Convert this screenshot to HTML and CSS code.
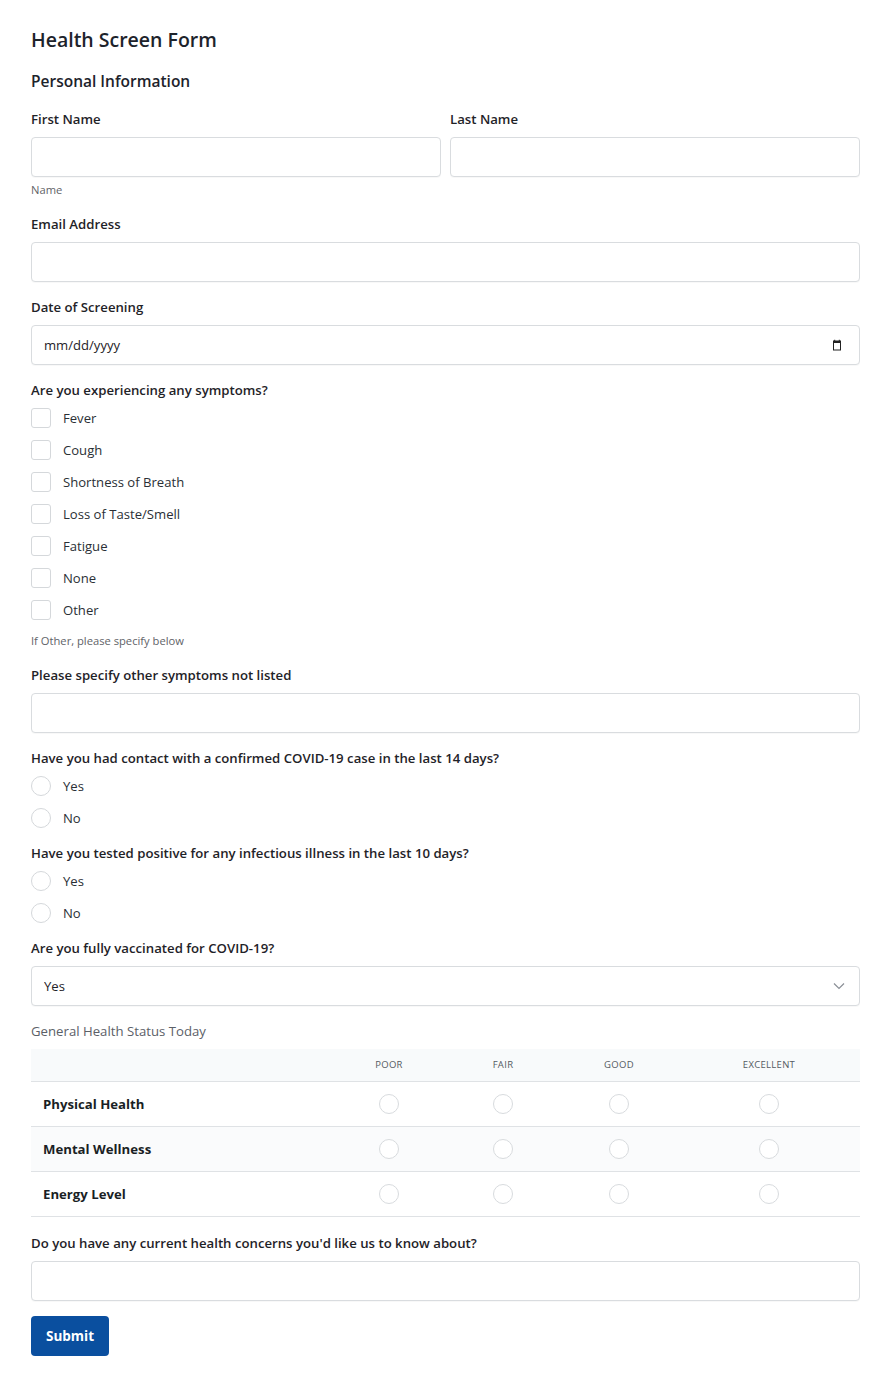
FILE: index.html
```html
<!DOCTYPE html>
<html lang="en">
<head>
<meta charset="utf-8">
<title>Health Screen Form</title>
<link rel="stylesheet" href="styles.css">
</head>
<body>
<form class="form">
  <h1 class="title">Health Screen Form</h1>
  <h2 class="section">Personal Information</h2>

  <div class="group">
    <div class="row2">
      <div class="col">
        <label class="label" for="fn">First Name</label>
        <input class="input" id="fn" type="text">
      </div>
      <div class="col">
        <label class="label" for="ln">Last Name</label>
        <input class="input" id="ln" type="text">
      </div>
    </div>
    <div class="help help-name">Name</div>
  </div>

  <div class="group">
    <label class="label" for="em">Email Address</label>
    <input class="input" id="em" type="email">
  </div>

  <div class="group">
    <label class="label" for="dt">Date of Screening</label>
    <div class="input date">
      <span>mm/dd/yyyy</span>
      <svg class="cal" width="12" height="12" viewBox="0 0 12 12"><path d="M2 1.5h1.2V0.8h1v0.7h3.6V0.8h1v0.7H10v10H2z" fill="#222"/><rect x="3" y="4" width="6" height="6.5" fill="#fff"/></svg>
    </div>
  </div>

  <div class="group">
    <div class="label">Are you experiencing any symptoms?</div>
    <div class="options">
      <label class="opt"><input type="checkbox" class="box"><span>Fever</span></label>
      <label class="opt"><input type="checkbox" class="box"><span>Cough</span></label>
      <label class="opt"><input type="checkbox" class="box"><span>Shortness of Breath</span></label>
      <label class="opt"><input type="checkbox" class="box"><span>Loss of Taste/Smell</span></label>
      <label class="opt"><input type="checkbox" class="box"><span>Fatigue</span></label>
      <label class="opt"><input type="checkbox" class="box"><span>None</span></label>
      <label class="opt"><input type="checkbox" class="box"><span>Other</span></label>
    </div>
    <div class="help help-other">If Other, please specify below</div>
  </div>

  <div class="group">
    <label class="label" for="os">Please specify other symptoms not listed</label>
    <input class="input" id="os" type="text">
  </div>

  <div class="group">
    <div class="label">Have you had contact with a confirmed COVID-19 case in the last 14 days?</div>
    <div class="options">
      <label class="opt"><input type="radio" name="c" class="rad"><span>Yes</span></label>
      <label class="opt"><input type="radio" name="c" class="rad"><span>No</span></label>
    </div>
  </div>

  <div class="group">
    <div class="label">Have you tested positive for any infectious illness in the last 10 days?</div>
    <div class="options">
      <label class="opt"><input type="radio" name="t" class="rad"><span>Yes</span></label>
      <label class="opt"><input type="radio" name="t" class="rad"><span>No</span></label>
    </div>
  </div>

  <div class="group">
    <label class="label" for="vac">Are you fully vaccinated for COVID-19?</label>
    <div class="select-wrap">
      <select class="input select" id="vac"><option>Yes</option><option>No</option></select>
      <svg class="chev" width="12" height="8" viewBox="0 0 12 8"><path d="M1 1.5l5 5 5-5" fill="none" stroke="#8a8f96" stroke-width="1.2"/></svg>
    </div>
  </div>

  <div class="group">
    <div class="legend">General Health Status Today</div>
    <table class="matrix">
      <colgroup><col class="c-label"><col class="c-poor"><col class="c-fair"><col class="c-good"><col class="c-exc"></colgroup>
      <thead>
        <tr><th></th><th>Poor</th><th>Fair</th><th>Good</th><th>Excellent</th></tr>
      </thead>
      <tbody>
        <tr><td class="rl">Physical Health</td><td><input type="radio" name="p" class="rad"></td><td><input type="radio" name="p" class="rad"></td><td><input type="radio" name="p" class="rad"></td><td><input type="radio" name="p" class="rad"></td></tr>
        <tr class="alt"><td class="rl">Mental Wellness</td><td><input type="radio" name="m" class="rad"></td><td><input type="radio" name="m" class="rad"></td><td><input type="radio" name="m" class="rad"></td><td><input type="radio" name="m" class="rad"></td></tr>
        <tr><td class="rl">Energy Level</td><td><input type="radio" name="e" class="rad"></td><td><input type="radio" name="e" class="rad"></td><td><input type="radio" name="e" class="rad"></td><td><input type="radio" name="e" class="rad"></td></tr>
      </tbody>
    </table>
  </div>

  <div class="group group-concerns">
    <label class="label" for="hc">Do you have any current health concerns you'd like us to know about?</label>
    <input class="input" id="hc" type="text">
  </div>

  <div class="actions">
    <button type="button" class="submit">Submit</button>
  </div>
</form>
</body>
</html>
```

FILE: styles.css
```css
* { box-sizing: border-box; }

html, body {
  margin: 0;
  background: #ffffff;
}

body {
  font-family: "Open Sans", "Noto Sans", Arial, sans-serif;
  color: #1f2328;
  font-size: 13.2px;
}

.form {
  padding: 26px 20px 24px 31px;
  display: flex;
  flex-direction: column;
}

.title {
  margin: 0;
  font-size: 19.5px;
  line-height: 28px;
  font-weight: 600;
  color: #1d232b;
}

.section {
  margin: 15px 0 16px;
  font-size: 15.5px;
  line-height: 24px;
  font-weight: 600;
  color: #1d232b;
}

.group {
  display: flex;
  flex-direction: column;
  margin-bottom: 15px;
}

.row2 {
  display: flex;
  gap: 9px;
}

.col {
  flex: 1;
  display: flex;
  flex-direction: column;
}

.label {
  display: block;
  font-size: 13.2px;
  line-height: 20px;
  font-weight: 600;
  color: #1f2328;
  margin-bottom: 8px;
}

.input {
  display: block;
  width: 100%;
  height: 40px;
  border: 1px solid #d9dcdf;
  border-radius: 4px;
  background: #fff;
  font: inherit;
  font-size: 13.1px;
  color: #1f2328;
  padding: 0 12px;
  margin: 0;
  box-shadow: 0 1px 1px rgba(0,0,0,0.03);
}

.date {
  display: flex;
  align-items: center;
  justify-content: space-between;
  padding: 0 16px 0 12px;
}

.help {
  font-size: 11.2px;
  line-height: 16px;
  color: #5f6368;
  margin-top: 6px;
}

.help-name {
  margin-top: 5px;
  margin-bottom: 1px;
}

.help-other {
  margin-top: 13px;
  margin-bottom: 1px;
}

.options {
  display: flex;
  flex-direction: column;
  gap: 12px;
}

.opt {
  display: flex;
  align-items: center;
  gap: 12px;
  height: 20px;
  font-size: 13.1px;
  color: #2a2f35;
}

.box, .rad {
  appearance: none;
  -webkit-appearance: none;
  width: 20px;
  height: 20px;
  margin: 0;
  border: 1px solid #d5d8db;
  background: #fff;
  flex: none;
}

.box { border-radius: 3px; }
.rad { border-radius: 50%; }

.select-wrap {
  position: relative;
}

.select {
  appearance: none;
  -webkit-appearance: none;
}

.chev {
  position: absolute;
  right: 15px;
  top: 16px;
  pointer-events: none;
}

.legend {
  font-size: 13.2px;
  line-height: 20px;
  color: #5b6067;
  margin-bottom: 8px;
}

.matrix {
  width: 100%;
  border-collapse: collapse;
  table-layout: fixed;
}

.c-label { width: 301px; }
.c-poor { width: 114px; }
.c-fair { width: 114px; }
.c-good { width: 118px; }

.matrix thead tr {
  background: #f8fafb;
  border-bottom: 1px solid #dfe2e5;
}

.matrix th {
  height: 32px;
  padding: 0;
  font-size: 9.5px;
  font-weight: 400;
  text-transform: uppercase;
  letter-spacing: 0.3px;
  color: #555b62;
  text-align: center;
}

.matrix tbody tr {
  border-bottom: 1px solid #dfe2e5;
}

.matrix tbody tr.alt {
  background: #fafbfc;
}

.matrix td {
  height: 45px;
  padding: 0;
  text-align: center;
  vertical-align: middle;
}

.matrix td .rad {
  display: inline-block;
  vertical-align: middle;
  border-color: #d8dbde;
}

.matrix .rl {
  text-align: left;
  padding-left: 12px;
  font-weight: 700;
  font-size: 13.2px;
  color: #1a1f25;
}

.group-concerns {
  margin-top: 1px;
}

.actions {
  display: flex;
}

.submit {
  height: 40px;
  padding: 0 15px;
  border: none;
  border-radius: 4px;
  background: #0a4f9f;
  color: #fff;
  font: inherit;
  font-size: 13.5px;
  font-weight: 700;
}
```
